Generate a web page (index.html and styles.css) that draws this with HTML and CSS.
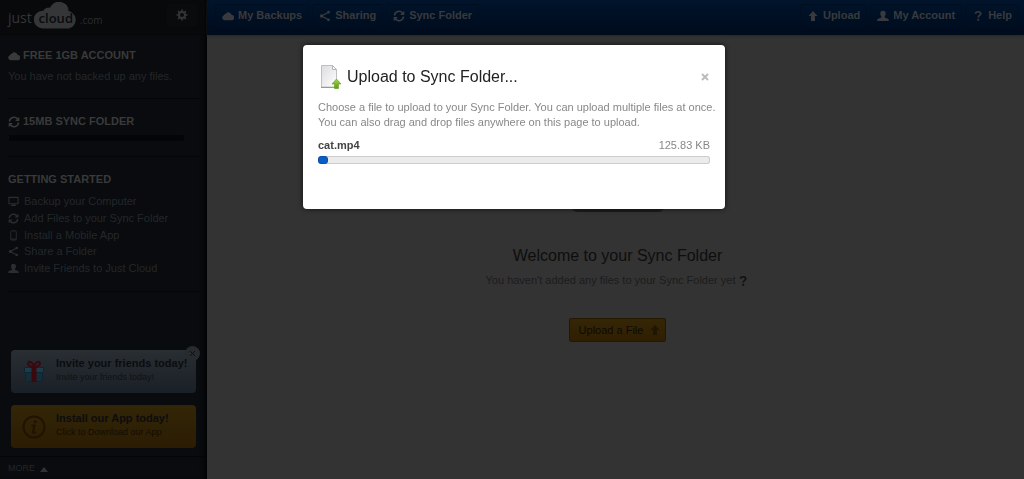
FILE: index.html
```html
<!DOCTYPE html>
<html lang="en">
<head>
<meta charset="utf-8">
<meta name="viewport" content="width=device-width, initial-scale=1">
<title>JustCloud - Sync Folder</title>
<link rel="stylesheet" href="styles.css">
</head>
<body>
<svg class="defs" aria-hidden="true">
  <symbol id="cloud" viewBox="0 0 14 12"><path d="M3 11a3 3 0 0 1-.8-5.800A2.500 2.500 0 0 1 4.500 3.300 3.600 3.600 0 0 1 11 4.600 3.200 3.200 0 0 1 11 11z"/></symbol>
  <symbol id="share" viewBox="0 0 12 12"><path d="M9.500 2.200 2.500 6l7 3.800" fill="none" stroke="currentColor" stroke-width="1.300"/><circle cx="9.500" cy="2.200" r="1.400"/><circle cx="2.500" cy="6" r="1.700"/><circle cx="9.500" cy="9.800" r="1.400"/></symbol>
  <symbol id="sync" viewBox="0 0 12 12"><path d="M1.500 5.500A4.500 4.500 0 0 1 9.500 3M10.500 6.500A4.500 4.500 0 0 1 2.500 9" fill="none" stroke="currentColor" stroke-width="1.600"/><path d="M11.300.700v4.200H7.100zM.7 11.300V7.100h4.200z"/></symbol>
  <symbol id="up" viewBox="0 0 12 12"><path d="M6 1l4.500 5H8v5H4V6H1.500z"/></symbol>
  <symbol id="user" viewBox="0 0 12 12"><path d="M6 .8c1.800 0 2.800 1.200 2.700 3C8.600 5.500 7.700 6.300 7.500 7c0 1 4 1.200 4.200 2.600V11H.3V9.600C.5 8.200 4.500 8 4.500 7 4.300 6.300 3.400 5.500 3.300 3.800 3.200 2 4.200.8 6 .8z"/></symbol>
  <symbol id="help" viewBox="0 0 12 12"><path d="M3.500 3.800C3.700 1 8.800 1.100 8.700 3.700 8.600 5.400 6.200 5.400 6.200 7.600" fill="none" stroke="currentColor" stroke-width="1.700"/><path d="M5.200 8.800h2v1.900h-2z"/></symbol>
  <symbol id="screen" viewBox="0 0 12 12"><path d="M1 1.500h10v7H1z" fill="none" stroke="currentColor" stroke-width="1.200"/><path d="M4 9h4v1.200h1V11H3v-.8h1z"/></symbol>
  <symbol id="phone" viewBox="0 0 12 12"><rect x="3" y="1" width="6" height="10" rx="1" fill="none" stroke="currentColor"/><path d="M3 9h6v2H3z" opacity=".5"/></symbol>
  <symbol id="gear" viewBox="0 0 12 12"><circle cx="6" cy="6" r="3" fill="none" stroke="currentColor" stroke-width="2"/><path d="M6 .5V3M6 9v2.500M.5 6H3M9 6h2.500M2.100 2.100 3.900 3.900M8.100 8.100l1.800 1.800M9.900 2.100 8.100 3.900M3.900 8.100 2.100 9.900" stroke="currentColor" stroke-width="1.700"/></symbol>
</svg>

<div class="app">
  <aside class="sidebar">
    <div class="brand">
      <a class="logo" href="#" aria-label="justcloud.com">
        <span class="logo-just">just</span>
        <span class="logo-cloud">
          <svg viewBox="0 0 44 27" aria-hidden="true"><path d="M9 26.500A8.900 8.900 0 0 1 8.500 8.700H15A10.500 9.500 0 0 1 17 4 9.500 9 0 0 1 34.500 9a9 9 0 0 1 .5 17.500z"/><circle cx="14.500" cy="11" r="5.500"/></svg>
          <span class="logo-word">cloud</span>
        </span>
        <span class="logo-com">.com</span>
      </a>
      <button class="settings" type="button" aria-label="Settings"><svg class="icon"><use href="#gear"/></svg></button>
    </div>
    <section class="block account">
      <h2 class="title"><svg class="icon"><use href="#cloud"/></svg>FREE 1GB ACCOUNT</h2>
      <p class="note">You have not backed up any files.</p>
    </section>
    <section class="block storage">
      <h2 class="title"><svg class="icon"><use href="#sync"/></svg>15MB SYNC FOLDER</h2>
      <div class="meter"></div>
    </section>
    <section class="block started">
      <h2 class="title">GETTING STARTED</h2>
      <ul class="tasks">
        <li><a href="#"><svg class="icon"><use href="#screen"/></svg>Backup your Computer</a></li>
        <li><a href="#"><svg class="icon"><use href="#sync"/></svg>Add Files to your Sync Folder</a></li>
        <li><a href="#"><svg class="icon"><use href="#phone"/></svg>Install a Mobile App</a></li>
        <li><a href="#"><svg class="icon"><use href="#share"/></svg>Share a Folder</a></li>
        <li><a href="#"><svg class="icon"><use href="#user"/></svg>Invite Friends to Just Cloud</a></li>
      </ul>
    </section>
    <div class="promos">
      <div class="promo invite">
        <a class="promo-link" href="#">
          <svg class="promo-icon" viewBox="0 0 24 24" aria-hidden="true"><path d="M3 11h18v11H3z" fill="#152c39"/><path d="M2 7h20v6H2z" fill="#1d3b49"/><path d="M2.500 7.500h19v5h-19zM3.500 12.500v9h17v-9" fill="none" stroke="#0a2635"/><path d="M9.500 7h5v15h-5z" fill="#3a080d"/><path d="M12 7C8 7 5 4.500 6.500 2.500S11 3 12 6.500C13 3 16 .5 17.500 2.500S16 7 12 7z" fill="none" stroke="#3a080d" stroke-width="2"/></svg>
          <span class="promo-text"><strong>Invite your friends today!</strong><small>Invite your friends today!</small></span>
        </a>
        <button class="dismiss" type="button" aria-label="Dismiss"><svg viewBox="0 0 15 15"><path d="M5 5l5 5M10 5l-5 5" stroke="currentColor" stroke-width="1"/></svg></button>
      </div>
      <div class="promo install">
        <a class="promo-link" href="#">
          <svg class="promo-icon" viewBox="0 0 24 24" aria-hidden="true"><circle cx="12" cy="12" r="10.500" fill="none" stroke="#1e1402" stroke-width="2"/><circle cx="13.200" cy="6.800" r="1.500" fill="#1e1402"/><path d="M9.500 10.500h3L11 17.500h3" fill="none" stroke="#1e1402" stroke-width="2"/></svg>
          <span class="promo-text"><strong>Install our App today!</strong><small>Click to Download our App</small></span>
        </a>
      </div>
    </div>
    <button class="more" type="button">MORE<svg viewBox="0 0 8 5" aria-hidden="true"><path d="M0 5l4-5 4 5z"/></svg></button>
  </aside>

  <div class="page">
    <header class="topbar">
      <nav class="nav">
        <a href="#"><svg class="icon"><use href="#cloud"/></svg>My Backups</a>
        <a href="#"><svg class="icon"><use href="#share"/></svg>Sharing</a>
        <a href="#"><svg class="icon"><use href="#sync"/></svg>Sync Folder</a>
      </nav>
      <nav class="nav">
        <a href="#"><svg class="icon"><use href="#up"/></svg>Upload</a>
        <a href="#"><svg class="icon"><use href="#user"/></svg>My Account</a>
        <a href="#"><svg class="icon"><use href="#help"/></svg>Help</a>
      </nav>
    </header>
    <main class="empty">
      <div class="laptop"></div>
      <h1>Welcome to your Sync Folder</h1>
      <p>You haven't added any files to your Sync Folder yet <svg class="icon"><use href="#help"/></svg></p>
      <button class="upload" type="button">Upload a File<svg class="icon"><use href="#up"/></svg></button>
    </main>
  </div>
</div>

<div class="overlay">
  <section class="modal" role="dialog" aria-labelledby="modal-title">
    <div class="modal-head">
      <svg class="file" viewBox="0 0 24 26" aria-hidden="true">
        <defs><linearGradient id="sheet" x1="0" y1="0" x2="1" y2="1"><stop offset="0" stop-color="#dcdcdf"/><stop offset="1" stop-color="#fff"/></linearGradient><linearGradient id="leaf" x1="0" y1="0" x2="0" y2="1"><stop offset="0" stop-color="#a5d64a"/><stop offset="1" stop-color="#5b9a12"/></linearGradient></defs>
        <path d="M3.500 1.500h11l4 4V23h-15z" fill="url(#sheet)" stroke="#c0c0c0"/><path d="M3 23.500h15" stroke="#999"/><path d="M14.500 1.500v4h4z" fill="#fff" stroke="#b4b4b4"/>
        <path d="M18.500 15l4.500 5h-2.500v4.500h-4V20H14z" fill="url(#leaf)" stroke="#6ba32a" stroke-width=".7"/>
      </svg>
      <h2 id="modal-title">Upload to Sync Folder...</h2>
      <button class="close" type="button" aria-label="Close"><svg viewBox="0 0 8 8"><path d="M1 1l6 6M7 1 1 7" stroke="currentColor" stroke-width="1.900"/></svg></button>
    </div>
    <p class="modal-copy">Choose a file to upload to your Sync Folder. You can upload multiple files at once. You can also drag and drop files anywhere on this page to upload.</p>
    <div class="upload-row"><strong>cat.mp4</strong><span>125.83 KB</span></div>
    <div class="progress" role="progressbar" aria-label="cat.mp4" aria-valuenow="2" aria-valuemin="0" aria-valuemax="100"><div class="progress-fill"></div></div>
  </section>
</div>
</body>
</html>
```

FILE: styles.css
```css
* { box-sizing: border-box; }
body {
  margin: 0;
  background: #333;
  font: 11px/15px "Liberation Sans", Arial, sans-serif;
}
h1, h2, p, ul { margin: 0; padding: 0; }
ul { list-style: none; }
a { color: inherit; text-decoration: none; }
button { margin: 0; padding: 0; border: 0; background: none; color: inherit; font: inherit; }
svg { fill: currentColor; flex: none; }
.defs { position: absolute; width: 0; height: 0; }
.icon { width: 12px; height: 12px; }

.app { display: flex; min-height: 100vh; }

/* Sidebar */
.sidebar {
  display: flex;
  flex-direction: column;
  flex: none;
  width: 207px;
  background: #090b0e;
  border-right: 2px solid #030405;
  box-shadow: inset -5px 0 3px -2px #06080a;
  color: #24272a;
}
.brand {
  display: flex;
  justify-content: space-between;
  height: 35px;
  padding: 0 4px 0 8px;
  background: #07090b;
  border-bottom: 1px solid #050608;
}
.logo { display: flex; align-items: flex-end; height: 29px; color: #343638; font-family: "Open Sans", sans-serif; }
.logo-just { font-size: 14px; line-height: 22px; }
.logo-cloud { display: grid; width: 44px; margin-left: 2px; }
.logo-cloud > * { grid-area: 1 / 1; }
.logo-cloud svg { width: 44px; height: 27px; }
.logo-word { align-self: end; text-align: center; color: #090b0e; font-size: 13px; font-weight: 600; line-height: 22px; }
.logo-com { margin-left: 2px; color: #2a2d30; font-size: 10px; line-height: 18px; }
.settings {
  display: flex;
  align-items: center;
  justify-content: center;
  width: 32px;
  height: 24px;
  margin: 3px 3px 0 0;
  border: 1px solid #08090b;
  border-radius: 2px;
  background: #090b0d;
  color: #333538;
}
.block { margin: 0 6px 0 8px; border-bottom: 1px solid #040506; }
.account { padding: 13px 0 14px; }
.storage { padding: 15px 0; }
.started { padding: 15px 0 14px; }
.title { display: flex; align-items: center; gap: 3px; color: #3a3a3a; font-size: 11px; line-height: 15px; font-weight: 700; }
.note { margin-top: 6px; }
.meter { width: 176px; height: 6px; margin-top: 6px; border-radius: 2px; background: #040507; border-left: 1px solid #04101c; }
.tasks { margin-top: 6px; line-height: 17px; }
.tasks a { display: flex; align-items: center; gap: 5px; height: 17px; }
.tasks li:nth-child(3n) a { height: 16px; }
.tasks .icon { width: 11px; height: 11px; color: #2b2d2f; }
.promos { display: grid; gap: 12px; margin: auto 9px 8px 11px; }
.promo { position: relative; border-radius: 4px; }
.promo-link { display: flex; align-items: center; gap: 10px; height: 43px; padding: 0 6px 0 11px; }
.promo-icon { width: 24px; height: 24px; }
.promo-text { display: grid; gap: 1px; margin-top: -3px; white-space: nowrap; }
.promo strong { color: #0c0d0e; font-size: 11px; line-height: 14px; }
.promo small { font-size: 9px; line-height: 13px; }
.invite { background: linear-gradient(#282e32, #1a2027); color: #101214; }
.install { background: linear-gradient(#332607, #2b1c03); color: #120d03; }
.dismiss { position: absolute; top: -4px; right: -4px; width: 15px; height: 15px; border-radius: 50%; background: #272b2e; color: #0c0e10; }
.dismiss svg { display: block; }
.more {
  display: flex;
  align-items: center;
  gap: 5px;
  height: 23px;
  padding-left: 8px;
  border-top: 1px solid #040507;
  font-size: 9px;
}
.more svg { width: 8px; height: 5px; margin-top: 3px; color: #303234; }

/* Page */
.page { display: flex; flex-direction: column; flex: 1; min-width: 0; }
.topbar {
  display: flex;
  justify-content: space-between;
  align-items: flex-start;
  height: 35px;
  padding: 4px 5px 0 8px;
  background: linear-gradient(#00142b, #000b1c);
  box-shadow: 0 1px 2px #262626;
  color: #383a3d;
  font-weight: 700;
}
.nav { display: flex; gap: 3px; }
.nav a {
  display: flex;
  align-items: center;
  gap: 4px;
  height: 23px;
  padding: 0 6px;
  border: 1px solid #000e21;
  border-radius: 3px;
}
.empty { display: flex; flex-direction: column; align-items: center; padding: 93px 0 0 4px; }
.laptop { width: 92px; height: 84px; border-radius: 4px 4px 5px 5px; background: #1b1b1b; }
.empty h1 { margin-top: 34px; color: #0e0e0e; font-size: 16px; line-height: 20px; font-weight: 400; }
.empty p { display: flex; align-items: center; gap: 2px; margin-top: 7px; color: #1c1c1c; }
.empty p .icon { color: #111; }
.upload {
  display: flex;
  align-items: center;
  gap: 6px;
  height: 24px;
  margin-top: 30px;
  padding: 0 4px 0 9px;
  border: 1px solid #231802;
  border-radius: 2px;
  background: linear-gradient(#352606, #2f1f02);
  color: #0d0a04;
}
.upload .icon { color: #201603; }

/* Upload dialog */
.overlay { position: fixed; inset: 0; display: flex; justify-content: center; align-items: flex-start; padding: 45px 0 0 4px; }
.modal { width: 422px; max-width: 100%; padding: 19px 15px 45px; border-radius: 4px; background: #fff; box-shadow: 0 0 5px #111; color: #888; }
.modal-head { display: flex; align-items: center; }
.file { width: 24px; height: 26px; }
.modal h2 { flex: 1; margin-left: 5px; color: #222; font-size: 16px; line-height: 20px; font-weight: 400; }
.close { display: flex; padding: 1px; color: #bbb; }
.close svg { width: 8px; height: 8px; }
.modal-copy { margin: 10px -12px 0 0; }
.upload-row { display: flex; justify-content: space-between; margin-top: 8px; }
.upload-row strong { color: #444; }
.progress { height: 8px; margin-top: 3px; border-radius: 3px; background: #ececec; box-shadow: inset 0 0 0 1px #ccc; }
.progress-fill { width: 10px; height: 8px; border-radius: 3px; background: #0a5fc6; border: 1px solid #0a4fa8; }
```
